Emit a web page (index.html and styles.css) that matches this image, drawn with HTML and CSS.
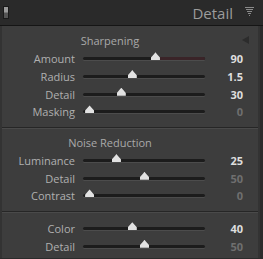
FILE: index.html
```html
<!DOCTYPE html>
<html lang="en">
<head>
    <title>Detail</title>
    <meta charset="UTF-8">
    <link rel="stylesheet" href="styles.css">
</head>
<body>
    <header class="bar">
        <span class="toggle"></span>
        <h1>Detail</h1>
        <svg class="filter" width="9" height="10" viewBox="0 0 9 10">
            <path d="M0 0.5H9M1 2.5H8M2 4.5H7M3 6.5H6M4 8.5H5" stroke="#8a8a8a" stroke-width="1"/>
        </svg>
    </header>

    <section class="panel">
        <div class="group">
            <div class="group-head">
                <h2>Sharpening</h2>
                <span class="tri"></span>
            </div>
            <div class="row"><label>Amount</label><div class="track"><div class="tint" style="left: 59%"></div><span class="thumb" style="left: 59%"></span></div><b>90</b></div>
            <div class="row"><label>Radius</label><div class="track"><span class="thumb" style="left: 40%"></span></div><b>1.5</b></div>
            <div class="row"><label>Detail</label><div class="track"><span class="thumb" style="left: 31%"></span></div><b>30</b></div>
            <div class="row"><label>Masking</label><div class="track"><span class="thumb" style="left: 5%"></span></div><b class="off">0</b></div>
        </div>

        <div class="group">
            <div class="group-head">
                <h2>Noise Reduction</h2>
            </div>
            <div class="row"><label>Luminance</label><div class="track"><span class="thumb" style="left: 27%"></span></div><b>25</b></div>
            <div class="row"><label>Detail</label><div class="track"><span class="thumb" style="left: 50%"></span></div><b class="off">50</b></div>
            <div class="row"><label>Contrast</label><div class="track"><span class="thumb" style="left: 5%"></span></div><b class="off">0</b></div>
        </div>

        <div class="group last">
            <div class="row"><label>Color</label><div class="track"><span class="thumb" style="left: 40%"></span></div><b>40</b></div>
            <div class="row"><label>Detail</label><div class="track"><span class="thumb" style="left: 50%"></span></div><b class="off">50</b></div>
        </div>
    </section>
</body>
</html>
```

FILE: styles.css
```css
* {
    box-sizing: border-box;
}

body {
    margin: 0;
    width: 263px;
    height: 259px;
    background: #2b2b2b;
    font-family: 'Open Sans', sans-serif;
    overflow: hidden;
}

.bar {
    height: 26px;
    display: flex;
    align-items: center;
    padding: 0 9px 0 3px;
    background: #2a2a2a;
    border-bottom: 1px solid #151515;
}

.toggle {
    width: 6px;
    height: 13px;
    background: linear-gradient(#9a9a9a 0, #9a9a9a 45%, #555 55%, #555 100%);
    border: 1px solid #1a1a1a;
}

.bar h1 {
    flex: 1;
    margin: 0 12px 0 0;
    text-align: right;
    font-size: 15px;
    font-weight: normal;
    color: #9c9c9c;
}

.filter {
    margin-top: -2px;
}

.panel {
    margin-right: 3px;
    height: 232px;
    background: #3d3d3d;
    border-left: 2px solid #333;
    border-right: 2px solid #333;
}

.group {
    padding: 5px 0 6px;
    border-bottom: 1px solid #262626;
    box-shadow: 0 1px 0 #4a4a4a;
}

.group.last {
    border-bottom: none;
    box-shadow: none;
    padding-top: 8px;
}

.group-head {
    position: relative;
    height: 19px;
    text-align: center;
}

.group-head h2 {
    margin: 0 0 0 -40px;
    font-size: 11px;
    font-weight: normal;
    line-height: 19px;
    color: #a9a9a9;
}

.tri {
    position: absolute;
    right: 9px;
    top: 5px;
    width: 0;
    height: 0;
    border-top: 4px solid transparent;
    border-bottom: 4px solid transparent;
    border-right: 7px solid #2c2c2c;
}

.row {
    display: flex;
    align-items: center;
    height: 17.7px;
}

.row label {
    width: 73px;
    text-align: right;
    font-size: 11px;
    color: #b0b0b0;
}

.track {
    position: relative;
    width: 122px;
    height: 3px;
    margin-left: 8px;
    background: #1c1c1c;
    border-radius: 2px;
    box-shadow: 0 1px 0 #4c4c4c;
}

.tint {
    position: absolute;
    top: 0;
    bottom: 0;
    right: 0;
    background: #3a2428;
    border-radius: 2px;
}

.thumb {
    position: absolute;
    top: -5px;
    width: 9px;
    height: 8px;
    margin-left: -4px;
    background: #e2e2e2;
    clip-path: polygon(50% 0, 65% 20%, 100% 65%, 100% 100%, 0 100%, 0 65%, 35% 20%);
}

.row b {
    width: 38px;
    text-align: right;
    font-size: 11px;
    font-weight: bold;
    color: #dedede;
}

.row b.off {
    color: #6f6f6f;
}
```
